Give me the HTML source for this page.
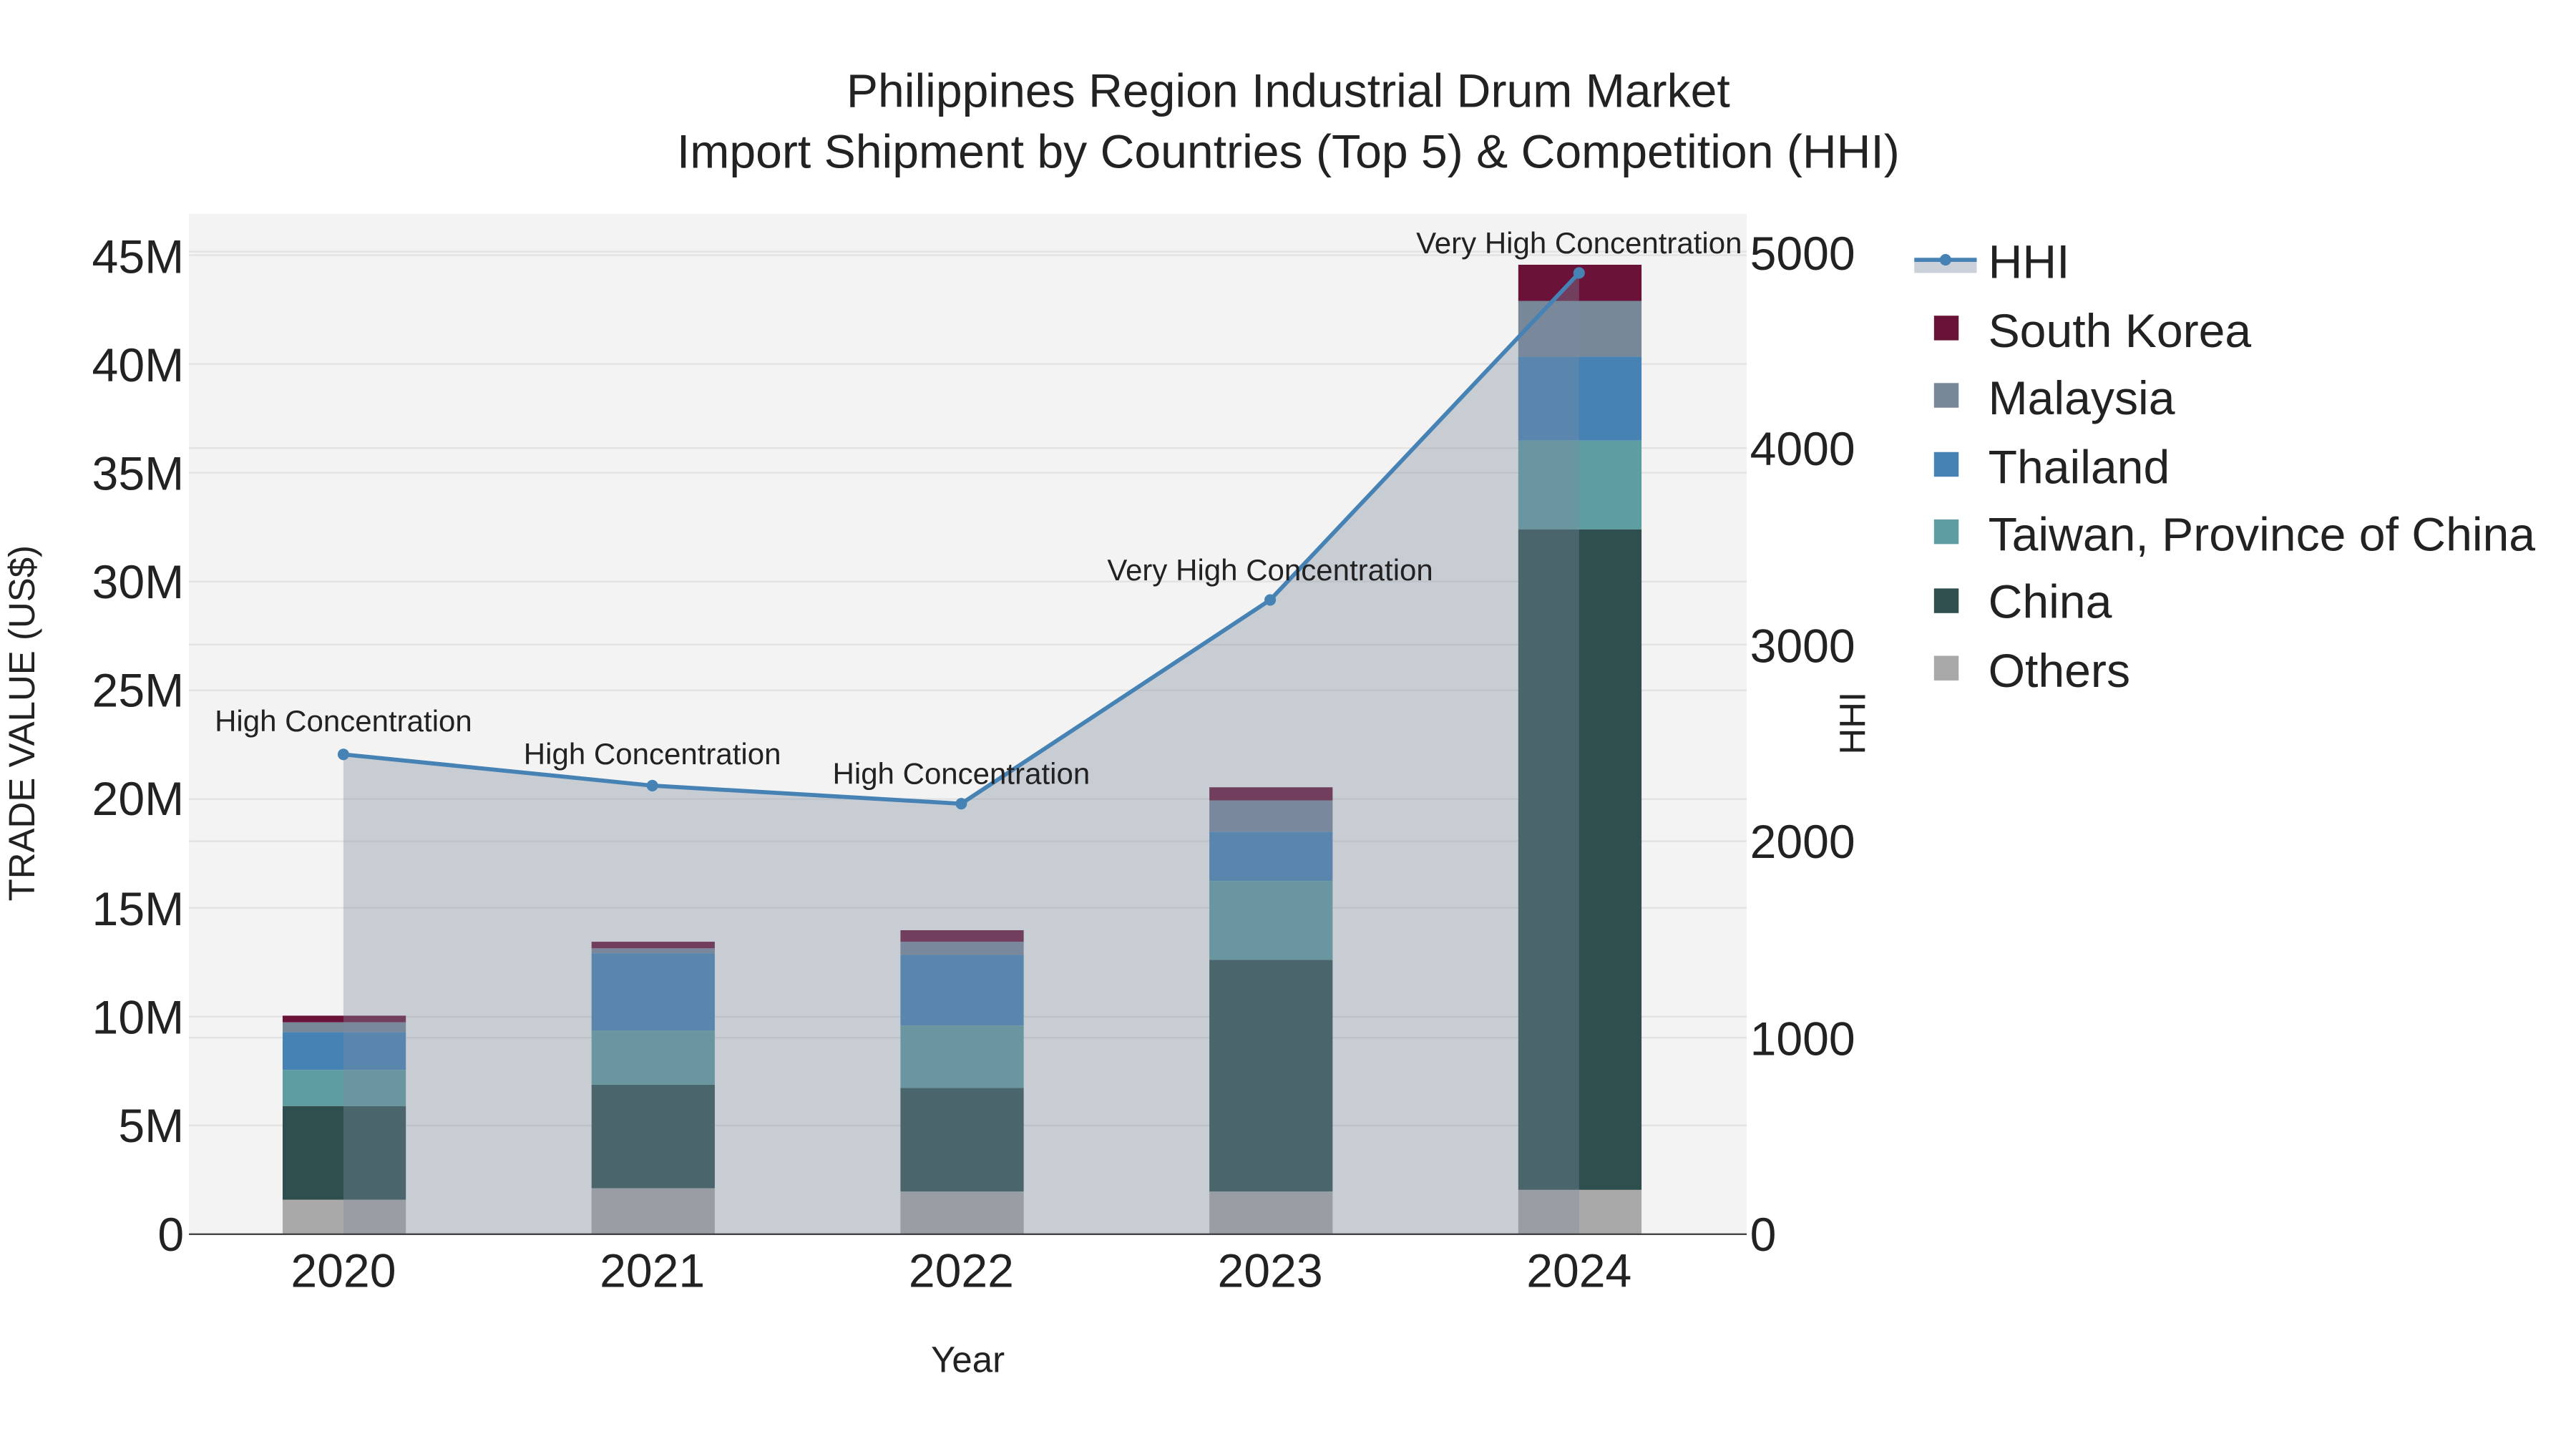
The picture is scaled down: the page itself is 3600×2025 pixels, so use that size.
<!DOCTYPE html>
<html><head><meta charset="utf-8"><style>
html,body{margin:0;padding:0;background:#fff;}
svg{display:block;}
text{font-family:"Liberation Sans",sans-serif;fill:#222;}
</style></head><body>
<svg width="3600" height="2025" viewBox="0 0 1567.7 881.6" xmlns="http://www.w3.org/2000/svg">
<rect x="0" y="0" width="1568" height="882" fill="#fff"/>
<rect x="115" y="130" width="948" height="621" fill="#f3f3f3"/>
<g stroke="#e2e2e2" stroke-width="1">
<line x1="115" x2="1063" y1="684.8" y2="684.8"/><line x1="115" x2="1063" y1="618.6" y2="618.6"/>
<line x1="115" x2="1063" y1="552.4" y2="552.4"/><line x1="115" x2="1063" y1="486.2" y2="486.2"/>
<line x1="115" x2="1063" y1="420" y2="420"/><line x1="115" x2="1063" y1="353.8" y2="353.8"/>
<line x1="115" x2="1063" y1="287.6" y2="287.6"/><line x1="115" x2="1063" y1="221.4" y2="221.4"/>
<line x1="115" x2="1063" y1="155.2" y2="155.2"/>
<line x1="115" x2="1063" y1="631.4" y2="631.4"/><line x1="115" x2="1063" y1="511.8" y2="511.8"/>
<line x1="115" x2="1063" y1="392.2" y2="392.2"/><line x1="115" x2="1063" y1="272.6" y2="272.6"/>
<line x1="115" x2="1063" y1="153" y2="153"/>
</g>
<g>
<rect x="172" y="730" width="75" height="21" fill="#a9a9a9"/>
<rect x="172" y="673" width="75" height="57" fill="#2f4f4f"/>
<rect x="172" y="651" width="75" height="22" fill="#5f9ea0"/>
<rect x="172" y="628" width="75" height="23" fill="#4682b4"/>
<rect x="172" y="622" width="75" height="6" fill="#778899"/>
<rect x="172" y="618" width="75" height="4" fill="#6b1238"/>

<rect x="360" y="723" width="75" height="28" fill="#a9a9a9"/>
<rect x="360" y="660" width="75" height="63" fill="#2f4f4f"/>
<rect x="360" y="627" width="75" height="33" fill="#5f9ea0"/>
<rect x="360" y="580" width="75" height="47" fill="#4682b4"/>
<rect x="360" y="577" width="75" height="3" fill="#778899"/>
<rect x="360" y="573" width="75" height="4" fill="#6b1238"/>

<rect x="548" y="725" width="75" height="26" fill="#a9a9a9"/>
<rect x="548" y="662" width="75" height="63" fill="#2f4f4f"/>
<rect x="548" y="624" width="75" height="38" fill="#5f9ea0"/>
<rect x="548" y="581" width="75" height="43" fill="#4682b4"/>
<rect x="548" y="573" width="75" height="8" fill="#778899"/>
<rect x="548" y="566" width="75" height="7" fill="#6b1238"/>

<rect x="736" y="725" width="75" height="26" fill="#a9a9a9"/>
<rect x="736" y="584" width="75" height="141" fill="#2f4f4f"/>
<rect x="736" y="536" width="75" height="48" fill="#5f9ea0"/>
<rect x="736" y="506" width="75" height="30" fill="#4682b4"/>
<rect x="736" y="487" width="75" height="19" fill="#778899"/>
<rect x="736" y="479" width="75" height="8" fill="#6b1238"/>

<rect x="924" y="724" width="75" height="27" fill="#a9a9a9"/>
<rect x="924" y="322" width="75" height="402" fill="#2f4f4f"/>
<rect x="924" y="268" width="75" height="54" fill="#5f9ea0"/>
<rect x="924" y="217" width="75" height="51" fill="#4682b4"/>
<rect x="924" y="183" width="75" height="34" fill="#778899"/>
<rect x="924" y="161" width="75" height="22" fill="#6b1238"/>
</g>
<polygon points="209,751 209,459 397,478 585,489 773,365 961,166 961,751" fill="rgb(125,139,158)" fill-opacity="0.364"/>
<line x1="115" x2="1063" y1="751" y2="751" stroke="#444" stroke-width="1"/>
<polyline points="209,459 397,478 585,489 773,365 961,166" fill="none" stroke="#4682b4" stroke-width="2.5"/>
<g fill="#4682b4"><circle cx="209" cy="459" r="3.5"/><circle cx="397" cy="478" r="3.5"/><circle cx="585" cy="489" r="3.5"/><circle cx="773" cy="365" r="3.5"/><circle cx="961" cy="166" r="3.5"/></g>
<g font-size="18.3" text-anchor="middle">
<text x="209" y="445">High Concentration</text>
<text x="397" y="465">High Concentration</text>
<text x="585" y="477">High Concentration</text>
<text x="773" y="353">Very High Concentration</text>
<text x="961" y="154">Very High Concentration</text>
</g>
<g font-size="28.8" text-anchor="end">
<text x="112" y="761">0</text><text x="112" y="695">5M</text><text x="112" y="629">10M</text>
<text x="112" y="563">15M</text><text x="112" y="496">20M</text><text x="112" y="430">25M</text>
<text x="112" y="364">30M</text><text x="112" y="298">35M</text><text x="112" y="232">40M</text>
<text x="112" y="166">45M</text>
</g>
<g font-size="28.8" text-anchor="start">
<text x="1065" y="761">0</text><text x="1065" y="642">1000</text><text x="1065" y="522">2000</text>
<text x="1065" y="403">3000</text><text x="1065" y="283">4000</text><text x="1065" y="164">5000</text>
</g>
<g font-size="28.8" text-anchor="middle">
<text x="209" y="783">2020</text><text x="397" y="783">2021</text><text x="585" y="783">2022</text>
<text x="773" y="783">2023</text><text x="961" y="783">2024</text>
</g>
<text x="589" y="835" font-size="22.2" text-anchor="middle">Year</text>
<text transform="translate(21,440) rotate(-90)" font-size="22.2" text-anchor="middle">TRADE VALUE (US$)</text>
<text transform="translate(1135,440) rotate(-90)" font-size="22.2" text-anchor="middle">HHI</text>
<g font-size="28.8" text-anchor="middle">
<text x="784" y="65">Philippines Region Industrial Drum Market</text>
<text x="784" y="102">Import Shipment by Countries (Top 5) &amp; Competition (HHI)</text>
</g>
<rect x="1165" y="158" width="38" height="8" fill="rgb(125,139,158)" fill-opacity="0.4"/>
<line x1="1165" x2="1203" y1="158" y2="158" stroke="#4682b4" stroke-width="2.5"/>
<circle cx="1184" cy="158" r="3.5" fill="#4682b4"/>
<g>
<rect x="1177" y="192" width="15" height="15" fill="#6b1238"/>
<rect x="1177" y="233" width="15" height="15" fill="#778899"/>
<rect x="1177" y="275" width="15" height="15" fill="#4682b4"/>
<rect x="1177" y="316" width="15" height="15" fill="#5f9ea0"/>
<rect x="1177" y="358" width="15" height="15" fill="#2f4f4f"/>
<rect x="1177" y="399" width="15" height="15" fill="#a9a9a9"/>
</g>
<g font-size="28.8">
<text x="1210" y="169">HHI</text>
<text x="1210" y="211">South Korea</text>
<text x="1210" y="252">Malaysia</text>
<text x="1210" y="294">Thailand</text>
<text x="1210" y="335">Taiwan, Province of China</text>
<text x="1210" y="376">China</text>
<text x="1210" y="418">Others</text>
</g>
</svg>
</body></html>
